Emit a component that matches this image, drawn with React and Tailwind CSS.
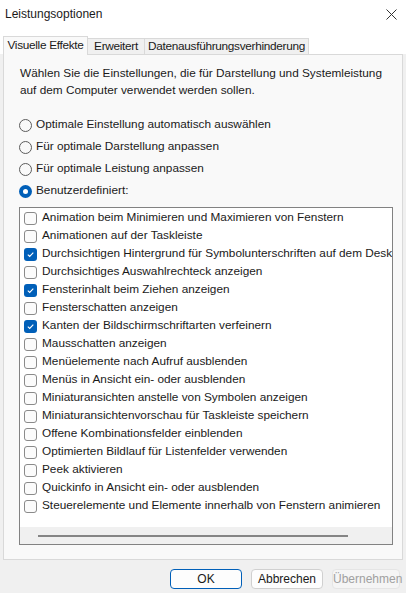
const items = [
  ['Animation beim Minimieren und Maximieren von Fenstern', false],
  ['Animationen auf der Taskleiste', false],
  ['Durchsichtigen Hintergrund für Symbolunterschriften auf dem Desktop verwenden', true],
  ['Durchsichtiges Auswahlrechteck anzeigen', false],
  ['Fensterinhalt beim Ziehen anzeigen', true],
  ['Fensterschatten anzeigen', false],
  ['Kanten der Bildschirmschriftarten verfeinern', true],
  ['Mausschatten anzeigen', false],
  ['Menüelemente nach Aufruf ausblenden', false],
  ['Menüs in Ansicht ein- oder ausblenden', false],
  ['Miniaturansichten anstelle von Symbolen anzeigen', false],
  ['Miniaturansichtenvorschau für Taskleiste speichern', false],
  ['Offene Kombinationsfelder einblenden', false],
  ['Optimierten Bildlauf für Listenfelder verwenden', false],
  ['Peek aktivieren', false],
  ['Quickinfo in Ansicht ein- oder ausblenden', false],
  ['Steuerelemente und Elemente innerhalb von Fenstern animieren', false],
]

const radios = [
  ['Optimale Einstellung automatisch auswählen', false],
  ['Für optimale Darstellung anpassen', false],
  ['Für optimale Leistung anpassen', false],
  ['Benutzerdefiniert:', true],
]

function Radio({ on }) {
  if (on) {
    return (
      <span className="w-[13px] h-[13px] rounded-full bg-[#005fb8] flex items-center justify-center shrink-0">
        <span className="w-[5px] h-[5px] rounded-full bg-white" />
      </span>
    )
  }
  return <span className="w-[13px] h-[13px] rounded-full border border-[#5c5c5c] bg-[#f9f9f9] shrink-0" />
}

function Check({ on }) {
  if (on) {
    return (
      <span className="w-[13px] h-[13px] rounded-[3px] bg-[#005fb8] flex items-center justify-center shrink-0">
        <svg width="9" height="9" viewBox="0 0 9 9">
          <path d="M1.8 4.6 L3.7 6.4 L7.3 2.6" fill="none" stroke="white" strokeWidth="1.1" />
        </svg>
      </span>
    )
  }
  return <span className="w-[13px] h-[13px] rounded-[3px] border border-[#8a8a8a] bg-[#fbfbfb] shrink-0" />
}

export default function App() {
  return (
    <div className="w-[406px] h-[593px] bg-[#f0f0f0] text-[11.8px] text-[#1a1a1a] overflow-hidden flex flex-col" style={{ fontFamily: '"Segoe UI", "Liberation Sans", sans-serif' }}>
      {/* title bar */}
      <div className="h-[28px] bg-white flex items-center justify-between pl-[5px] pr-[9px] shrink-0">
        <span className="text-[12px]">Leistungsoptionen</span>
        <svg width="11" height="11" viewBox="0 0 11 11">
          <path d="M0.5 0.5 L10.5 10.5 M10.5 0.5 L0.5 10.5" stroke="#333" strokeWidth="1" />
        </svg>
      </div>
      <div className="h-[8px] bg-white shrink-0" />

      {/* tabs */}
      <div className="flex items-end pl-[3px] h-[18px] shrink-0 bg-white tracking-[-0.3px] whitespace-nowrap">
        <div className="w-[85px] h-[19px] bg-[#f9f9f9] border border-b-0 border-[#d9d9d9] flex items-center justify-center -mb-px relative z-10">Visuelle Effekte</div>
        <div className="w-[57px] h-[16px] bg-[#f0f0f0] border border-l-0 border-b-0 border-[#d9d9d9] flex items-center justify-center">Erweitert</div>
        <div className="w-[164px] h-[16px] bg-[#f0f0f0] border border-l-0 border-b-0 border-[#d9d9d9] flex items-center justify-center">Datenausführungsverhinderung</div>
      </div>

      {/* panel */}
      <div className="mx-[3px] h-[506px] bg-[#f9f9f9] border border-[#d9d9d9] pt-[10px] px-[15px] flex flex-col shrink-0">
        <p className="leading-[17px] pl-px whitespace-nowrap">
          Wählen Sie die Einstellungen, die für Darstellung und Systemleistung<br />auf dem Computer verwendet werden sollen.
        </p>
        <div className="mt-[18px] flex flex-col gap-[6px]">
          {radios.map(([t, on]) => (
            <div key={t} className="flex items-center gap-[4px] h-[16px]">
              <Radio on={on} />
              <span>{t}</span>
            </div>
          ))}
        </div>
        <div className="mt-[8px] h-[338px] w-[374px] border border-[#828282] bg-white flex flex-col">
          <div className="flex-1 pt-[1px] pl-[4px] overflow-hidden">
            {items.map(([t, on]) => (
              <div key={t} className="flex items-center gap-[5px] h-[18px] whitespace-nowrap">
                <Check on={on} />
                <span>{t}</span>
              </div>
            ))}
          </div>
          <div className="h-[17px] bg-[#f0f0f0] flex items-center pl-[18px] shrink-0">
            <div className="w-[310px] h-[2px] bg-[#858585]" />
          </div>
        </div>
      </div>

      {/* buttons */}
      <div className="flex justify-end gap-[9px] pr-[6px] pt-[9px]">
        <button className="w-[72px] h-[20px] rounded-[4px] border border-[#005fb8] bg-[#fdfdfd] text-[12px] text-[#1a1a1a]">OK</button>
        <button className="w-[72px] h-[20px] rounded-[4px] border border-[#d0d0d0] bg-[#fdfdfd] text-[12px] text-[#1a1a1a]">Abbrechen</button>
        <button className="w-[68px] h-[20px] rounded-[4px] border border-[#e5e5e5] bg-[#f5f5f5] text-[12px] text-[#a0a0a0]">Übernehmen</button>
      </div>
    </div>
  )
}
